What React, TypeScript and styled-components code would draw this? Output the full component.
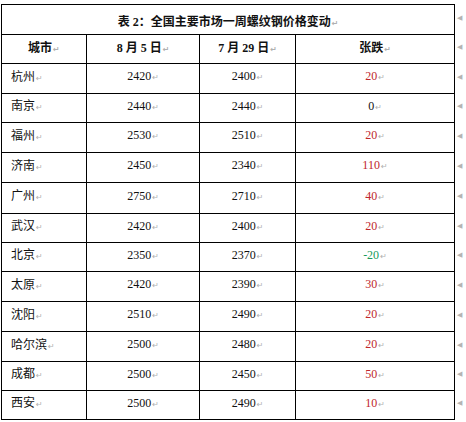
import React from "react";
import styled, { createGlobalStyle } from "styled-components";

const GlobalStyle = createGlobalStyle`
  body {
    margin: 0;
    background: #ffffff;
  }
`;

interface Row {
  city: string;
  aug5: number;
  jul29: number;
  change: number;
  h: number;
}

const rows: Row[] = [
  { city: "杭州", aug5: 2420, jul29: 2400, change: 20, h: 30 },
  { city: "南京", aug5: 2440, jul29: 2440, change: 0, h: 29 },
  { city: "福州", aug5: 2530, jul29: 2510, change: 20, h: 30 },
  { city: "济南", aug5: 2450, jul29: 2340, change: 110, h: 30 },
  { city: "广州", aug5: 2750, jul29: 2710, change: 40, h: 31 },
  { city: "武汉", aug5: 2420, jul29: 2400, change: 20, h: 29 },
  { city: "北京", aug5: 2350, jul29: 2370, change: -20, h: 29 },
  { city: "太原", aug5: 2420, jul29: 2390, change: 30, h: 30 },
  { city: "沈阳", aug5: 2510, jul29: 2490, change: 20, h: 30 },
  { city: "哈尔滨", aug5: 2500, jul29: 2480, change: 20, h: 30 },
  { city: "成都", aug5: 2500, jul29: 2450, change: 50, h: 29 },
  { city: "西安", aug5: 2500, jul29: 2490, change: 10, h: 29 },
];

const Page = styled.div`
  padding: 4px 0 0 1px;
  font-family: "Liberation Serif", "Noto Sans CJK SC", serif;
  font-size: 12px;
  color: #111111;
`;

const Table = styled.table`
  border-collapse: collapse;
  table-layout: fixed;
`;

const Tr = styled.tr<{ h: number }>`
  height: ${(p) => p.h}px;
`;

const Cell = styled.td<{ align?: "left" | "center" }>`
  border: 1px solid #000000;
  padding: 0 0 3px ${(p) => (p.align === "left" ? "9px" : "0")};
  text-align: ${(p) => p.align ?? "center"};
  vertical-align: middle;
  white-space: nowrap;
  line-height: 14px;
`;

const HeadCell = styled(Cell)`
  font-weight: bold;
  padding-bottom: 0;
`;

const TitleCell = styled(Cell)`
  font-weight: bold;
  padding: 6px 0 0 0;
`;

const MarkCell = styled.td`
  border: none;
  width: 8px;
  padding: 0 0 4px 2px;
  font-family: "DejaVu Sans", sans-serif;
  font-size: 7px;
  color: #b4b4b4;
  vertical-align: middle;
`;

const City = styled.span`
  font-family: "Noto Sans CJK SC", sans-serif;
  font-size: 12px;
`;

const Change = styled.span<{ tone: "up" | "down" | "flat" }>`
  color: ${(p) =>
    p.tone === "up" ? "#c0262c" : p.tone === "down" ? "#1a9a5a" : "#111111"};
`;

const Ret = styled.span`
  font-family: "DejaVu Sans", sans-serif;
  font-size: 8px;
  color: #b0b0b0;
  margin-left: 1px;
`;

const R = () => <Ret>↵</Ret>;

const App: React.FC = () => {
  return (
    <Page>
      <GlobalStyle />
      <Table>
        <colgroup>
          <col style={{ width: 85 }} />
          <col style={{ width: 114 }} />
          <col style={{ width: 96 }} />
          <col style={{ width: 160 }} />
          <col style={{ width: 10 }} />
        </colgroup>
        <tbody>
          <Tr h={30}>
            <TitleCell colSpan={4}>
              表 2：全国主要市场一周螺纹钢价格变动
              <R />
            </TitleCell>
            <MarkCell>◀</MarkCell>
          </Tr>
          <Tr h={29}>
            <HeadCell>
              城市
              <R />
            </HeadCell>
            <HeadCell>
              8 月 5 日<R />
            </HeadCell>
            <HeadCell>
              7 月 29 日<R />
            </HeadCell>
            <HeadCell>
              张跌
              <R />
            </HeadCell>
            <MarkCell>◀</MarkCell>
          </Tr>
          {rows.map((r) => (
            <Tr key={r.city} h={r.h}>
              <Cell align="left">
                <City>{r.city}</City>
                <R />
              </Cell>
              <Cell>
                {r.aug5}
                <R />
              </Cell>
              <Cell>
                {r.jul29}
                <R />
              </Cell>
              <Cell>
                <Change
                  tone={r.change > 0 ? "up" : r.change < 0 ? "down" : "flat"}
                >
                  {r.change}
                </Change>
                <R />
              </Cell>
              <MarkCell>◀</MarkCell>
            </Tr>
          ))}
        </tbody>
      </Table>
    </Page>
  );
};

export default App;
